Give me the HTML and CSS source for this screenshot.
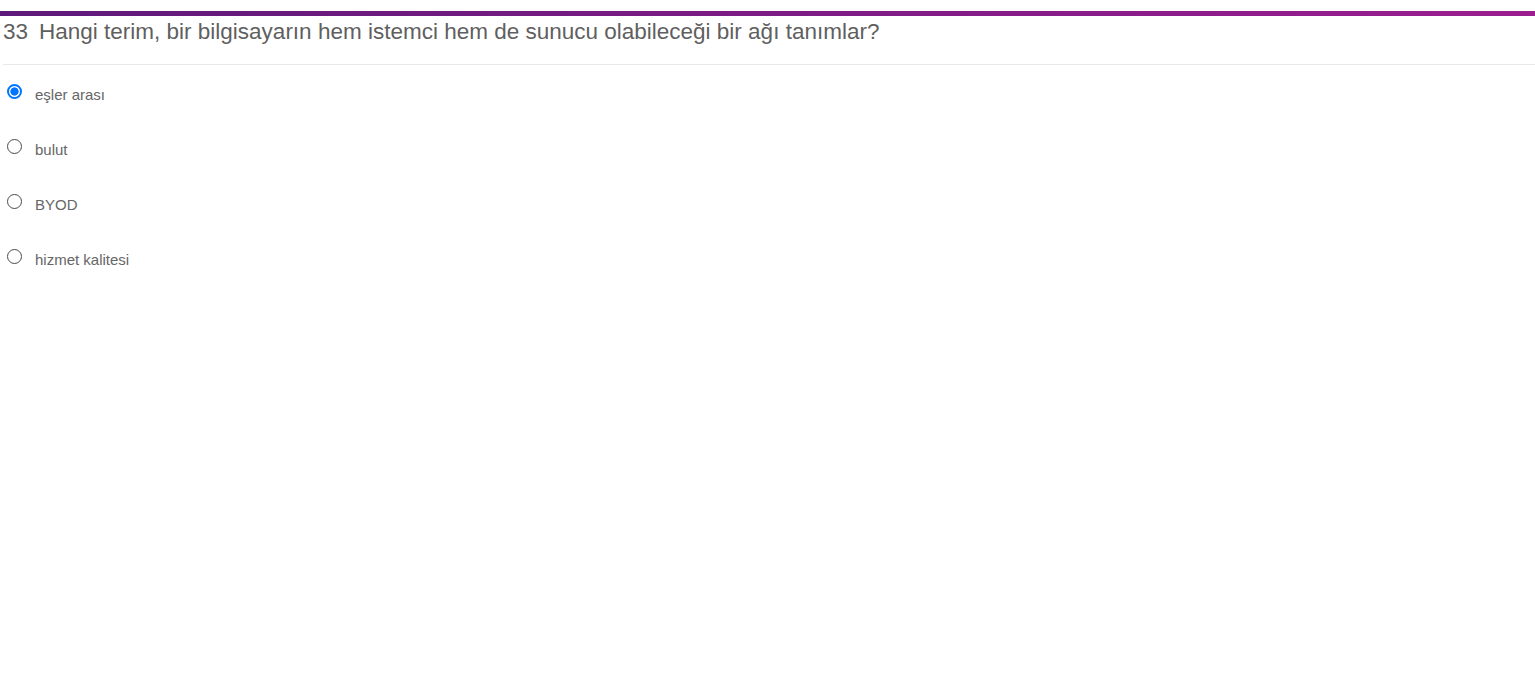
FILE: index.html
```html
<!DOCTYPE html>
<html lang="tr">
<head>
<meta charset="utf-8">
<link rel="stylesheet" href="styles.css">
</head>
<body>
<div class="topbar"></div>
<div class="question">
  <h2 class="title"><span class="num">33</span>Hangi terim, bir bilgisayarın hem istemci hem de sunucu olabileceği bir ağı tanımlar?</h2>
  <div class="options">
    <label class="opt"><input type="radio" name="q" checked><span>eşler arası</span></label>
    <label class="opt"><input type="radio" name="q"><span>bulut</span></label>
    <label class="opt"><input type="radio" name="q"><span>BYOD</span></label>
    <label class="opt"><input type="radio" name="q"><span>hizmet kalitesi</span></label>
  </div>
</div>
</body>
</html>
```
FILE: styles.css
```css
html, body {
  margin: 0;
  padding: 0;
  background: #fff;
}
body {
  font-family: "Liberation Sans", Arial, sans-serif;
  color: #666;
}
.topbar {
  margin-top: 11px;
  height: 5px;
  background: linear-gradient(to right, #5e1a7a, #9b1e8f);
}
.question {
  padding-left: 3px;
}
.title {
  margin: 0;
  font-weight: normal;
  font-size: 22.5px;
  line-height: 32px;
  color: #5f5f5f;
  padding-bottom: 16px;
  border-bottom: 1px solid #e8e8e8;
}
.num {
  margin-right: 11px;
}
.options {
  padding-top: 14px;
}
.opt {
  display: flex;
  align-items: flex-start;
  height: 55px;
  font-size: 15px;
  color: #666;
}
.opt input {
  -webkit-appearance: none;
  appearance: none;
  box-sizing: border-box;
  margin: 5px 0 0 4px;
  width: 15px;
  height: 15px;
  border: 1.3px solid #4a4a4a;
  border-radius: 50%;
  background: #fff;
}
.opt input:checked {
  border: 2px solid #0075ff;
  background: radial-gradient(circle, #0075ff 0 3.8px, #fff 4.4px);
}
.opt span {
  margin-left: 13px;
  padding-top: 6px;
  line-height: 20px;
}
```
